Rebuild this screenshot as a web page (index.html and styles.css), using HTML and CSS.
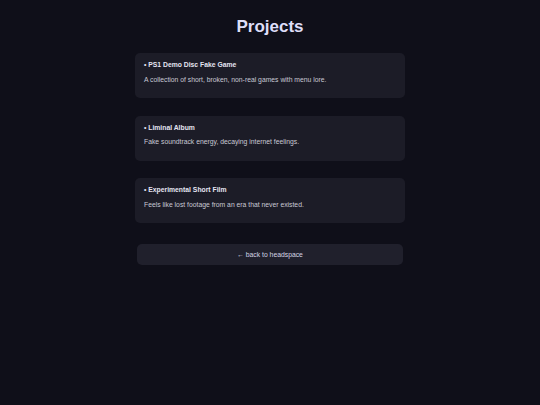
FILE: index.html
```html
<!DOCTYPE html>
<html lang="en">
<head>
    <meta charset="UTF-8">
    <meta name="viewport" content="width=device-width, initial-scale=1.0">
    <title>Projects</title>
    <link rel="stylesheet" href="styles.css">
</head>
<body>
    <div class="container">
        <h1>Projects</h1>

        <div class="project">
            <h3>• PS1 Demo Disc Fake Game</h3>
            <p>A collection of short, broken, non-real games with menu lore.</p>
        </div>

        <div class="project">
            <h3>• Liminal Album</h3>
            <p>Fake soundtrack energy, decaying internet feelings.</p>
        </div>

        <div class="project">
            <h3>• Experimental Short Film</h3>
            <p>Feels like lost footage from an era that never existed.</p>
        </div>

        <a class="back" href="#">← back to headspace</a>
    </div>
</body>
</html>
```

FILE: styles.css
```css
body, html {
    font-family: "Liberation Sans", Arial, sans-serif;
    margin: 0;
    padding: 0;
    height: 100%;
    background-color: #0f0f19;
    color: #dcdcf0;
}
.container {
    width: 270px;
    margin: 0 auto;
    padding-top: 17px;
}
h1 {
    font-size: 17px;
    text-align: center;
    margin: 0 0 16px;
    color: #dedef8;
    line-height: 20px;
}
.project {
    background-color: #1c1c27;
    border-radius: 5px;
    padding: 8px 9px 10px;
    margin-bottom: 17.5px;
    height: 27px;
}
.project h3 {
    font-size: 6.8px;
    margin: 0 0 5.5px;
    line-height: 8px;
    color: #e4e4f2;
}
.project p {
    font-size: 6.8px;
    margin: 0;
    line-height: 9px;
    color: #c8c8d4;
}
.back {
    display: block;
    margin: 21px 2px 0;
    height: 21px;
    line-height: 21px;
    text-align: center;
    font-size: 6.8px;
    color: #d4d4e4;
    background-color: #20202c;
    border-radius: 5px;
    text-decoration: none;
}
```
